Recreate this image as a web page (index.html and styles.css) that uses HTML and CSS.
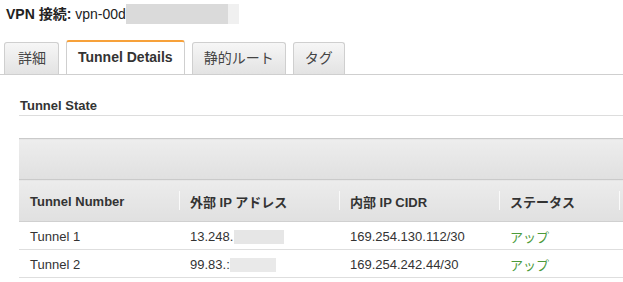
FILE: index.html
```html
<!DOCTYPE html>
<html lang="ja">
<head>
<meta charset="UTF-8" />
<title>VPN 接続</title>
<link rel="stylesheet" href="styles.css">
</head>
<body>

<h1 class="title"><b>VPN 接続:</b> vpn-00d<span class="masked masked-title"></span></h1>

<nav class="tabs">
  <div class="tab">詳細</div>
  <div class="tab active">Tunnel Details</div>
  <div class="tab">静的ルート</div>
  <div class="tab">タグ</div>
</nav>

<section class="panel">
  <h2 class="section-title">Tunnel State</h2>

  <table class="grid">
    <colgroup>
      <col class="c-wide"><col class="c-wide"><col class="c-wide"><col class="c-status"><col class="c-rest">
    </colgroup>
    <thead>
      <tr class="toolbar"><th colspan="5"></th></tr>
      <tr class="cols">
        <th>Tunnel Number</th>
        <th>外部 IP アドレス</th>
        <th>内部 IP CIDR</th>
        <th>ステータス</th>
        <th></th>
      </tr>
    </thead>
    <tbody>
      <tr>
        <td>Tunnel 1</td>
        <td>13.248.<span class="masked masked-ip1"></span></td>
        <td>169.254.130.112/30</td>
        <td class="up">アップ</td>
        <td></td>
      </tr>
      <tr>
        <td>Tunnel 2</td>
        <td>99.83.:<span class="masked masked-ip2"></span></td>
        <td>169.254.242.44/30</td>
        <td class="up">アップ</td>
        <td></td>
      </tr>
    </tbody>
  </table>
</section>

</body>
</html>
```

FILE: styles.css
```css
* {
  box-sizing: border-box;
}
body {
  margin: 0;
  font-family: "Liberation Sans", Arial, "Noto Sans CJK JP", sans-serif;
  font-size: 13px;
  color: #333;
  background: #fff;
  overflow: hidden;
}
.title {
  margin: 0;
  padding: 5px 0 0 6px;
  height: 24px;
  font-size: 14px;
  font-weight: normal;
  line-height: 18px;
  color: #222;
}
.title b {
  font-weight: 700;
}
.masked {
  display: inline-block;
  vertical-align: middle;
  background: #dcdcdc;
}
.masked-title {
  width: 113px;
  height: 20px;
  margin-top: -3px;
  background: linear-gradient(to right, #dadada 0, #dadada 90%, #f0f0f0 90%);
}
.masked-ip1 {
  width: 50px;
  height: 14px;
  margin-left: 1px;
  background: #e6e6e6;
}
.masked-ip2 {
  width: 46px;
  height: 14px;
  background: #e9e9e9;
}

/* tabs */
.tabs {
  display: flex;
  gap: 7px;
  margin-top: 18px;
  padding-left: 4px;
  height: 33px;
  border-bottom: 1px solid #cfcfcf;
}
.tab {
  height: 32px;
  padding: 0 11px;
  border: 1px solid #cfcfcf;
  border-bottom: none;
  border-radius: 3px 3px 0 0;
  background: linear-gradient(#f6f6f6, #e3e3e3);
  font-size: 14px;
  line-height: 31px;
  color: #444;
}
.tab:first-child {
  padding: 0 12px 0 13px;
}
.tab.active {
  height: 34px;
  margin-top: -2px;
  border-top: 2px solid #f7a13a;
  background: #fff;
  font-weight: 700;
  color: #333;
}

/* panel */
.panel {
  padding-left: 19px;
}
.section-title {
  margin: 23px 0 0;
  padding: 0 0 2px 1px;
  font-size: 13px;
  font-weight: 700;
  color: #333;
  border-bottom: 1px solid #ddd;
}
.grid {
  width: 700px;
  margin-top: 22px;
  border-collapse: collapse;
  table-layout: fixed;
}
.c-wide { width: 160px; }
.c-status { width: 120px; }
.c-rest { width: 100px; }
.grid th,
.grid td {
  padding: 0 11px;
  text-align: left;
  white-space: nowrap;
  overflow: hidden;
}
.toolbar th {
  height: 41px;
  border-top: 1px solid #cacaca;
  border-bottom: 1px solid #cacaca;
  background: linear-gradient(#ededed, #e0e0e0);
}
.cols th {
  position: relative;
  height: 42px;
  padding-top: 2px;
  font-weight: 700;
  color: #333;
  border-bottom: 1px solid #d0d0d0;
  background: linear-gradient(#ececec, #e0e0e0);
}
.cols th + th::before {
  content: "";
  position: absolute;
  left: 0;
  top: 11px;
  height: 19px;
  border-left: 1px solid #fafafa;
  box-shadow: -1px 0 0 #d2d2d2;
}
.grid td {
  height: 28px;
  padding-top: 2px;
  color: #333;
  border-bottom: 1px solid #dedede;
}
.grid td.up {
  color: #4c9a3a;
}
```
